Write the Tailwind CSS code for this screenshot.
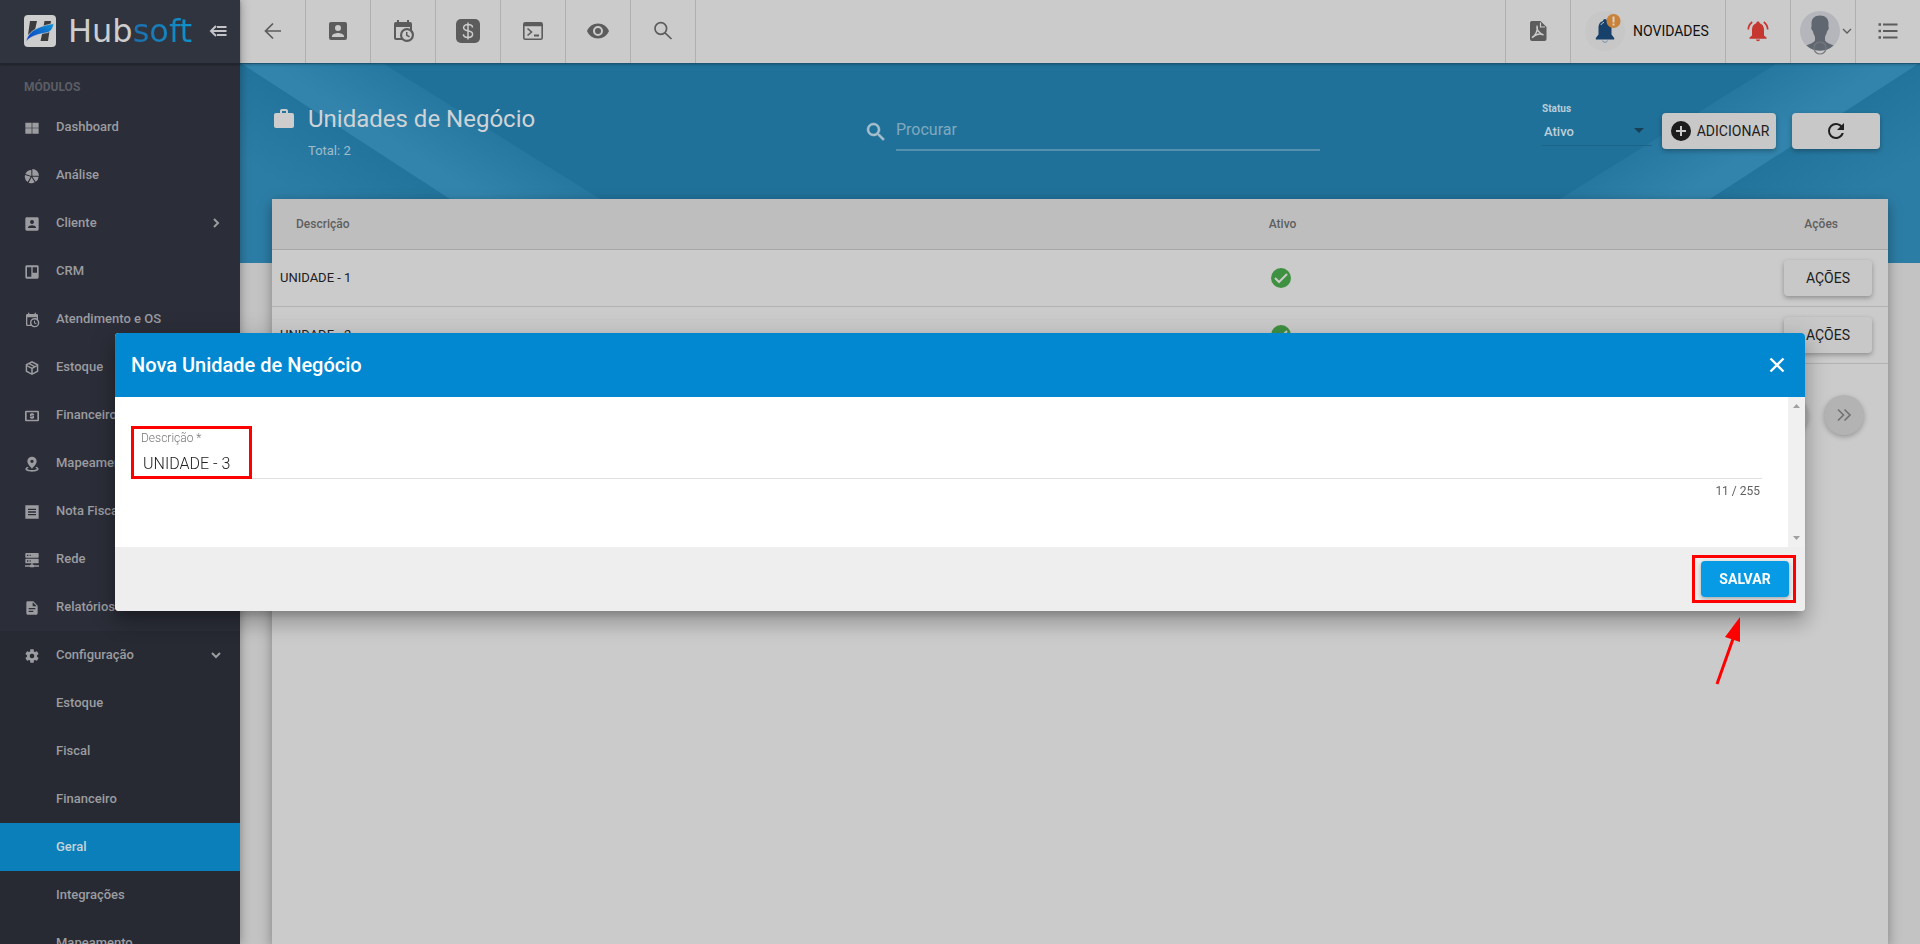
<!DOCTYPE html>
<html lang="pt-BR">
<head>
  <meta charset="UTF-8">
  <meta name="viewport" content="width=device-width, initial-scale=1.0">
  <title>Hubsoft - Unidades de Negócio</title>
  <script src="https://cdn.jsdelivr.net/npm/@tailwindcss/browser@4"></script>
</head>
<body class="h-screen overflow-hidden flex bg-[#c3c3c3] font-['Roboto','Liberation_Sans',sans-serif] text-[#202020]">

  <!-- Menu lateral -->
  <aside class="relative z-20 w-60 shrink-0 flex flex-col bg-[#2b2d38] shadow-[0_0_10px_rgba(0,0,0,0.35)]">
    <div class="h-16 shrink-0 flex items-center pl-6 pr-3 pb-px bg-[#30343f] border-b border-[#22252e] shadow-[0_1px_2px_rgba(0,0,0,0.3)]">
      <svg class="size-8 shrink-0" viewBox="0 0 32 32">
        <defs>
          <linearGradient id="swoosh" x1="0" y1="1" x2="1" y2="0">
            <stop offset="0" stop-color="#0a39c4"/><stop offset="1" stop-color="#1296d2"/>
          </linearGradient>
        </defs>
        <rect width="32" height="32" rx="4" fill="#cdcdcd"/>
        <path d="M6 6h7l-2 9-7 5zM20.500 6H27l-3 20h-7.500l1.800-8z" fill="#3c3c3e"/>
        <path d="M2 26.500C4 17 12 11.500 30 8.500C29 13 27.500 16 24 17.500C16 19 8 20 2 26.500Z" fill="url(#swoosh)" stroke="#cdcdcd" stroke-width=".7"/>
      </svg>
      <div class="flex-1 pl-3 text-[32px] leading-10 font-['DejaVu_Sans',sans-serif] whitespace-nowrap"><span class="text-[#cdcdcd]">Hub</span><span class="bg-linear-to-r from-[#1c6fae] to-[#0d93cb] bg-clip-text text-transparent">soft</span></div>
      <button class="size-5 shrink-0" aria-label="Recolher menu">
        <svg class="size-5" viewBox="0 0 20 20" fill="none" stroke="#c4c4c6" stroke-width="2"><path d="M8 5L3 10L8 15M4 10H18.500M9 6H18.500M9 14H18.500"/></svg>
      </button>
    </div>
    <h3 class="h-[39px] shrink-0 pl-6 pt-[13px] text-[12px] leading-5 font-bold text-[#5b5d65]">MÓDULOS</h3>
    <nav id="menu" class="text-[13px] font-medium text-[#9b9ca0]"></nav>
  </aside>

  <div class="flex-1 min-w-0 flex flex-col">
    <!-- Barra superior -->
    <header class="relative z-10 h-16 shrink-0 flex bg-[#cbcbcb] border-b border-[#1d5674] text-[#5c5c5c] shadow-[0_1px_2px_rgba(0,0,0,0.2)]">
      <button class="w-[66px] grid place-items-center pb-px border-r border-[#b0b0b0]" aria-label="Voltar">
        <svg class="size-6" viewBox="0 0 24 24" fill="none" stroke="currentColor" stroke-width="1.700"><path d="M20 12H5M12 4.500L4.500 12L12 19.500"/></svg>
      </button>
      <button class="w-[65px] grid place-items-center pb-px border-r border-[#b0b0b0]" aria-label="Clientes">
        <svg class="size-6" viewBox="0 0 24 24" fill="currentColor"><path d="M6,17C6,15 10,13.9 12,13.9C14,13.9 18,15 18,17V18H6M15,9A3,3 0 0,1 12,12A3,3 0 0,1 9,9A3,3 0 0,1 12,6A3,3 0 0,1 15,9M3,5V19A2,2 0 0,0 5,21H19A2,2 0 0,0 21,19V5A2,2 0 0,0 19,3H5C3.89,3 3,3.9 3,5Z"/></svg>
      </button>
      <button class="w-[65px] grid place-items-center pb-px border-r border-[#b0b0b0]" aria-label="Agenda">
        <svg class="size-6" viewBox="0 0 24 24" fill="currentColor"><path d="M15,13H16.5V15.82L18.94,17.23L18.19,18.53L15,16.69V13M19,8H5V19H9.67C9.24,18.09 9,17.07 9,16A7,7 0 0,1 16,9C17.07,9 18.09,9.24 19,9.67V8M5,21C3.89,21 3,20.1 3,19V5C3,3.89 3.89,3 5,3H6V1H8V3H16V1H18V3H19A2,2 0 0,1 21,5V11.1C22.24,12.36 23,14.09 23,16A7,7 0 0,1 16,23C14.09,23 12.36,22.24 11.1,21H5M16,11.15A4.85,4.85 0 0,0 11.15,16C11.15,18.68 13.32,20.85 16,20.85A4.85,4.85 0 0,0 20.85,16C20.85,13.32 18.68,11.15 16,11.15Z"/></svg>
      </button>
      <button class="w-[65px] grid place-items-center pb-px border-r border-[#b0b0b0]" aria-label="Financeiro">
        <svg class="size-6" viewBox="0 0 24 24"><rect width="24" height="24" rx="5" fill="#5c5c5c"/><path d="M16.500 8.500C16.500 6.500 14.500 5.600 12 5.600S7.600 6.600 7.600 8.700C7.600 13 16.600 10.600 16.600 15.200C16.600 17.400 14.600 18.400 12 18.400S7.400 17.400 7.400 15.200M12 3.500V20.500" fill="none" stroke="#cbcbcb" stroke-width="1.500"/></svg>
      </button>
      <button class="w-[65px] grid place-items-center pb-px border-r border-[#b0b0b0]" aria-label="Terminal">
        <svg class="size-6" viewBox="0 0 24 24" fill="none" stroke="currentColor" stroke-width="1.600"><rect x="2.800" y="3.800" width="18.400" height="16.400" rx="1.500"/><path d="M3 5.500H21" stroke-width="3.500"/><path d="M6.500 9.500L10.500 13L6.500 16.500"/><path d="M13 16.500H18" stroke-width="2"/></svg>
      </button>
      <button class="w-[65px] grid place-items-center pb-px border-r border-[#b0b0b0]" aria-label="Monitorar">
        <svg class="size-6" viewBox="0 0 24 24" fill="currentColor"><path d="M12,9A3,3 0 0,0 9,12A3,3 0 0,0 12,15A3,3 0 0,0 15,12A3,3 0 0,0 12,9M12,17A5,5 0 0,1 7,12A5,5 0 0,1 12,7A5,5 0 0,1 17,12A5,5 0 0,1 12,17M12,4.5C7,4.5 2.73,7.61 1,12C2.73,16.39 7,19.5 12,19.5C17,19.5 21.27,16.39 23,12C21.27,7.61 17,4.5 12,4.5Z"/></svg>
      </button>
      <button class="w-[65px] grid place-items-center pb-px border-r border-[#b0b0b0]" aria-label="Buscar">
        <svg class="size-6" viewBox="0 0 24 24" fill="none" stroke="currentColor" stroke-width="1.700"><circle cx="9.800" cy="9.500" r="5.800"/><path d="M14 13.800L20.500 20"/></svg>
      </button>
      <div class="flex-1"></div>
      <button class="w-[66px] grid place-items-center pb-px border-x border-[#b0b0b0]" aria-label="PDF">
        <svg class="size-6" viewBox="0 0 24 24"><path d="M5.500 2H14.500L20.500 8V20A2 2 0 0 1 18.500 22H6A2 2 0 0 1 4 20V4A2 2 0 0 1 5.500 2Z" fill="#5c5c5c"/><path d="M14.500 3.500V8H19" fill="none" stroke="#cbcbcb" stroke-width="1.200"/><path d="M11 7.500C10 9.500 12.500 14 17.500 16C14 14.200 9.500 15.200 6 18.700C9 17 12.500 11 11 7.500Z" fill="none" stroke="#cbcbcb" stroke-width="1.400"/></svg>
      </button>
      <button class="w-[155px] flex items-center gap-2 pl-[14px] pb-px border-r border-[#b0b0b0] text-sm text-[#101010]">
        <svg class="size-10" viewBox="0 0 40 40">
          <circle cx="20" cy="20" r="20" fill="#c7c7c7"/>
          <path d="M20 8C18.800 8 18 8.800 18 10C14.500 11 13.500 14 13.500 17V23.500L10.800 27V28.500H29.200V27L26.500 23.500V17C26.500 14 25.500 11 22 10C22 8.800 21.200 8 20 8Z" fill="#17406a"/>
          <path d="M16 14C16.500 12.500 17.500 11.800 19 11.500" fill="none" stroke="#c7c7c7"/>
          <path d="M17.500 29.500A2.600 2.600 0 0 0 22.500 29.500" fill="none" stroke="#7592ad"/>
          <circle cx="28.500" cy="10" r="7" fill="#c98237"/>
          <path d="M28.500 5.500V11.500M28.500 12.500V14.500" stroke="#dcd0c2" stroke-width="2"/>
        </svg>
        NOVIDADES
      </button>
      <button class="w-[65px] grid place-items-center pb-px border-r border-[#b0b0b0]" aria-label="Notificações">
        <svg class="size-6" viewBox="0 0 24 24"><path d="M12 2.500C11 2.500 10.300 3.200 10.300 4.200C7.500 5 6 7.500 6 10.500V16.500L3.500 18.500V19.700H20.500V18.500L18 16.500V10.500C18 7.500 16.500 5 13.700 4.200C13.700 3.200 13 2.500 12 2.500ZM10 20.600A2 1.700 0 0 0 14 20.600Z" fill="#c5372f"/><path d="M2.300 10.500C2.400 7.500 3.800 4.800 6.200 3M21.700 10.500C21.600 7.500 20.200 4.800 17.800 3" fill="none" stroke="#c5372f" stroke-width="1.700"/></svg>
      </button>
      <button class="w-[65px] flex items-center gap-[1px] pl-[9px] pb-px border-r border-[#b0b0b0]" aria-label="Usuário">
        <svg class="size-10 overflow-visible" viewBox="0 0 40 40">
          <circle cx="20" cy="20" r="20" fill="#b4b6bb"/>
          <path d="M20 4.500C14.500 4.500 11.500 7.500 11.500 12.500C11.500 14 11.800 15 11.200 16.500C11.200 18.500 12.200 19.200 12.800 20C13.500 23 14.500 24.500 15 26V29.500C13.500 32 9 33 6.500 34.500A20 20 0 0 0 33.500 34.500C31 33 26.500 32 25 29.500V26C25.500 24.500 26.500 23 27.200 20C27.800 19.200 28.800 18.500 28.800 16.500C28.200 15 28.500 14 28.500 12.500C28.500 7.500 25.500 4.500 20 4.500Z" fill="#616770"/>
          <path d="M14.500 39.200A20 20 0 0 0 25.500 39.200A6 6 0 0 1 14.500 39.200Z" fill="#cbcbcb"/>
          <circle cx="20" cy="37" r="6" fill="none" stroke="#77797c" stroke-width="1.200"/>
        </svg>
        <svg class="size-3" viewBox="0 0 12 12" fill="none" stroke="currentColor" stroke-width="1.300"><path d="M2 4L6 8L10 4"/></svg>
      </button>
      <button class="w-16 grid place-items-center pb-px" aria-label="Opções">
        <svg class="size-6" viewBox="0 0 24 24" stroke="currentColor" stroke-width="2"><path d="M2.500 5.500H5M2.500 12H5M2.500 18.500H5" stroke-width="2.400"/><path d="M7 5.500H21.500M7 12H21.500M7 18.500H21.500"/></svg>
      </button>
    </header>

    <main class="relative flex-1 min-h-0 flex flex-col">
      <div class="absolute inset-x-0 top-0 h-[199px] flex justify-between overflow-hidden bg-[#20719a]">
        <svg class="w-[480px] h-[200px] shrink-0" viewBox="0 0 480 200">
          <defs>
            <linearGradient id="outer" gradientUnits="userSpaceOnUse" x1="2" y1="0" x2="-42" y2="68">
              <stop offset="0" stop-color="#23749c"/><stop offset="1" stop-color="#2c7da6"/>
            </linearGradient>
            <linearGradient id="stripe" gradientUnits="userSpaceOnUse" x1="144" y1="0" x2="111" y2="52">
              <stop offset="0" stop-color="#2778a1"/><stop offset="1" stop-color="#3284ad"/>
            </linearGradient>
          </defs>
          <path d="M0 0H2L310 200H0Z" fill="url(#outer)"/>
          <path d="M2 0H144L464 200H310Z" fill="url(#stripe)"/>
        </svg>
        <svg class="w-[480px] h-[200px] shrink-0 -scale-x-100" viewBox="0 0 480 200">
          <path d="M0 0H2L310 200H0Z" fill="url(#outer)"/>
          <path d="M2 0H144L464 200H310Z" fill="url(#stripe)"/>
        </svg>
      </div>

      <!-- Cabeçalho da página -->
      <div class="relative h-[135px] shrink-0 flex items-start pl-8 pr-10">
        <svg class="size-6 mt-[43px]" viewBox="0 0 24 24" fill="#cdcdcd"><path d="M10,2H14A2,2 0 0,1 16,4V6H20A2,2 0 0,1 22,8V19A2,2 0 0,1 20,21H4C2.89,21 2,20.1 2,19V8C2,6.89 2.89,6 4,6H8V4C8,2.89 8.89,2 10,2M14,6V4H10V6H14Z"/></svg>
        <div class="w-[568px] pl-3 pt-[39px]">
          <h1 class="text-2xl leading-8 text-[#cfd3d6]">Unidades de Negócio</h1>
          <p class="pt-[6px] text-[13px] leading-5 text-[#9fbccb]">Total: 2</p>
        </div>
        <div class="flex-1 flex items-center pt-12">
          <label for="search" class="pr-2">
            <svg class="size-6" viewBox="0 0 24 24" fill="#a6c0cd"><path d="M9.500,3A6.500,6.500 0 0,1 16,9.500C16,11.110 15.410,12.590 14.440,13.730L14.710,14H15.500L20.500,19L19,20.500L14,15.500V14.710L13.730,14.440C12.590,15.410 11.110,16 9.500,16A6.500,6.500 0 0,1 3,9.500A6.500,6.500 0 0,1 9.500,3M9.500,5C7,5 5,7 5,9.500C5,12 7,14 9.500,14C12,14 14,12 14,9.500C14,7 12,5 9.500,5Z" stroke="#a6c0cd" stroke-width=".5"/></svg>
          </label>
          <input id="search" type="text" placeholder="Procurar" class="w-[424px] h-[39px] pb-[2px] border-b-2 border-[#5590ae] text-base text-[#cdcdcd] placeholder:text-[#7fa9be] outline-none">
        </div>
        <div class="relative w-[110px] pt-10">
          <label for="status" class="block h-[10px] text-[10px] leading-[10px] font-bold text-[#b9cdd7]">Status</label>
          <select id="status" class="appearance-none w-full h-[32px] pl-[2px] pt-[5px] border-b border-[#1b648a] text-[13px] font-medium text-[#bccfd9] outline-none">
            <option>Ativo</option>
            <option>Inativo</option>
          </select>
          <svg class="absolute right-2 top-[64px] w-[10px] h-[5px] pointer-events-none" viewBox="0 0 10 5" fill="#173f55"><path d="M0 0H10L5 5Z"/></svg>
        </div>
        <button class="mt-[49px] ml-[10px] w-[114px] h-9 flex items-center justify-center gap-1 rounded bg-[#c8c8c8] text-sm shadow-[0_2px_5px_rgba(0,0,0,0.3)]">
          <svg class="size-6" viewBox="0 0 24 24"><circle cx="12" cy="12" r="10" fill="#1c1c1c"/><path d="M12 7V17M7 12H17" stroke="#c8c8c8" stroke-width="2"/></svg>
          ADICIONAR
        </button>
        <button class="mt-[49px] ml-4 w-[88px] h-9 grid place-items-center rounded bg-[#c8c8c8] shadow-[0_2px_5px_rgba(0,0,0,0.3)]" aria-label="Atualizar">
          <svg class="size-6" viewBox="0 0 24 24" fill="#202020"><path d="M17.650,6.350C16.200,4.900 14.210,4 12,4A8,8 0 0,0 4,12A8,8 0 0,0 12,20C15.730,20 18.840,17.450 19.730,14H17.650C16.830,16.330 14.610,18 12,18A6,6 0 0,1 6,12A6,6 0 0,1 12,6C13.660,6 15.140,6.690 16.220,7.780L13,11H20V4L17.650,6.350Z"/></svg>
        </button>
      </div>

      <!-- Tabela -->
      <div class="relative flex-1 mx-8 bg-[#cbcbcb] shadow-[0_4px_12px_rgba(0,0,0,0.35)]">
        <table class="w-full table-fixed">
          <thead>
            <tr class="h-[50px] bg-[#bebebe] border-b border-[#a8a8a8] text-left text-xs text-[#5f5f5f]">
              <th class="w-[61%] pl-6 font-medium">Descrição</th>
              <th class="pl-[11px] font-medium">Ativo</th>
              <th class="pr-[50px] text-right font-medium">Ações</th>
            </tr>
          </thead>
          <tbody id="units" class="text-[13px]"></tbody>
        </table>
        <div class="flex justify-end gap-4 pt-[31px] pr-6">
          <button class="size-10 grid place-items-center rounded-full bg-[#b3b3b3] text-[#707070] shadow-[0_2px_5px_rgba(0,0,0,0.25)]" aria-label="Próxima">
            <svg class="size-6" viewBox="0 0 24 24" fill="none" stroke="currentColor" stroke-width="1.600"><path d="M9 6L15 12L9 18"/></svg>
          </button>
          <button class="size-10 grid place-items-center rounded-full bg-[#b3b3b3] text-[#707070] shadow-[0_2px_5px_rgba(0,0,0,0.25)]" aria-label="Última">
            <svg class="size-6" viewBox="0 0 24 24" fill="none" stroke="currentColor" stroke-width="1.600"><path d="M6 6.500L11.500 12L6 17.500M12.500 6.500L18 12L12.500 17.500"/></svg>
          </button>
        </div>
      </div>
    </main>
  </div>

  <!-- Janela de cadastro -->
  <div class="fixed inset-0 z-30 flex items-center px-[115px]">
    <form role="dialog" aria-labelledby="dialog-title" class="flex-1 rounded bg-white shadow-[0_7px_8px_-4px_rgba(0,0,0,0.2),0_13px_19px_2px_rgba(0,0,0,0.14),0_5px_24px_4px_rgba(0,0,0,0.14)]">
      <div class="h-16 flex items-center justify-between pl-4 pr-4 rounded-t bg-[#0288d1] text-white">
        <h2 id="dialog-title" class="text-xl font-medium">Nova Unidade de Negócio</h2>
        <button type="button" class="size-6" aria-label="Fechar">
          <svg class="size-6" viewBox="0 0 24 24" fill="none" stroke="currentColor" stroke-width="2.300"><path d="M5.500 5.500L18.500 18.500M18.500 5.500L5.500 18.500"/></svg>
        </button>
      </div>
      <div class="h-[150px] flex">
        <div class="flex-1 pl-[25px] pr-[26px] pt-[33px]">
          <div class="relative">
            <label for="descricao" class="block pl-px text-xs leading-4 font-light text-[#757575]">Descrição *</label>
            <input id="descricao" type="text" maxlength="255" value="UNIDADE - 3" class="w-full h-[33px] pl-[3px] pt-[2px] border-b border-[#dedede] text-base font-light text-[#212121] outline-none">
            <div class="absolute -left-[9px] -top-[4px] w-[121px] h-[53px] border-3 border-[#ff0000]"></div>
          </div>
          <p class="pt-1 pr-[2px] text-right text-xs leading-4 text-[#616161]">11 / 255</p>
        </div>
        <div class="w-[17px] flex flex-col items-center justify-between py-[7px] bg-[#f0f0f0]">
          <svg class="w-[7px] h-1" viewBox="0 0 7 4" fill="#a0a0a0"><path d="M3.500 0L7 4H0Z"/></svg>
          <svg class="w-[7px] h-1" viewBox="0 0 7 4" fill="#a0a0a0"><path d="M0 0H7L3.500 4Z"/></svg>
        </div>
      </div>
      <div class="h-16 flex items-center justify-end px-4 rounded-b bg-[#eeeeee]">
        <div class="relative">
          <button type="button" class="block w-[88px] h-9 rounded bg-[#079be6] text-sm font-bold text-white shadow-[0_2px_5px_rgba(0,0,0,0.3)]">SALVAR</button>
          <div class="absolute -left-[9px] -right-[7px] -inset-y-[6px] border-3 border-[#ff0000]"></div>
          <svg class="absolute left-[12px] top-[56px] w-[30px] h-[70px]" viewBox="0 0 30 70"><path d="M4 67L20 22" stroke="#ff0000" stroke-width="3"/><path d="M27 0L12 20L27 25Z" fill="#ff0000"/></svg>
        </div>
      </div>
    </form>
  </div>

  <script>
    const modules = [
      { name: "Dashboard", icon: "M2,4H11.500V11.500H2ZM12.500,4H22V11.500H12.500ZM2,12.500H11.500V20.500H2ZM12.500,12.500H22V20.500H12.500Z" },
      { name: "Análise", icon: "M12.500,1.500A10,10 0 0,1 22.500,11.500H12.500ZM11,3V12L2,9A10,10 0 0,1 11,3ZM1.500,10.500L10,13.300L5.500,21A10,10 0 0,1 1.500,10.500ZM12.500,13H22A10,10 0 0,1 17.500,20.500ZM11.300,13.800L16,21.500A10,10 0 0,1 7,22Z" },
      { name: "Cliente", arrow: "M9 6L15 12L9 18", icon: "M6,17C6,15 10,13.9 12,13.9C14,13.9 18,15 18,17V18H6M15,9A3,3 0 0,1 12,12A3,3 0 0,1 9,9A3,3 0 0,1 12,6A3,3 0 0,1 15,9M2,4V20A2,2 0 0,0 4,22H20A2,2 0 0,0 22,20V4A2,2 0 0,0 20,2H4C2.890,2 2,2.900 2,4Z" },
      { name: "CRM", icon: "M4,2A2,2 0 0,0 2,4V20A2,2 0 0,0 4,22H20A2,2 0 0,0 22,20V4A2,2 0 0,0 20,2ZM4.500,5H11V19H4.500ZM13,5H19.500V13H13Z" },
      { name: "Atendimento e OS", icon: "M15,13H16.5V15.82L18.94,17.23L18.19,18.53L15,16.69V13M19,8H5V19H9.67C9.24,18.09 9,17.07 9,16A7,7 0 0,1 16,9C17.07,9 18.09,9.24 19,9.67V8M5,21C3.89,21 3,20.1 3,19V5C3,3.89 3.89,3 5,3H6V1H8V3H16V1H18V3H19A2,2 0 0,1 21,5V11.1C22.24,12.36 23,14.09 23,16A7,7 0 0,1 16,23C14.09,23 12.36,22.24 11.1,21H5M16,11.15A4.85,4.85 0 0,0 11.15,16C11.15,18.68 13.32,20.85 16,20.85A4.85,4.85 0 0,0 20.85,16C20.85,13.32 18.68,11.15 16,11.15Z" },
      { name: "Estoque", icon: "M12,1.500L21.500,6.500V17.500L12,22.500L2.500,17.500V6.500ZM12,4L9.500,5.300L16.500,9L19,7.800ZM7.300,6.500L5,7.800L12,11.300L14.200,10.200ZM4.700,9.800V16.300L10.800,19.500V13ZM19.300,9.800L13.200,13V19.500L19.300,16.300Z" },
      { name: "Financeiro", icon: "M3,4A2,2 0 0,0 1.500,5.500V18.500A2,2 0 0,0 3,20H21A2,2 0 0,0 22.500,18.500V5.500A2,2 0 0,0 21,4ZM4,6.500H20V17.500H4ZM11,7.500H13V8.500H15V10.500H11V11.200H15V15.500H13V16.500H11V15.500H9V13.500H13V12.800H9V8.500H11Z" },
      { name: "Mapeamento", icon: "M12,1A7,7 0 0,0 5,8C5,12.500 12,19 12,19C12,19 19,12.500 19,8A7,7 0 0,0 12,1ZM12,5.500A2.500,2.500 0 0,1 12,10.500A2.500,2.500 0 0,1 12,5.500ZM5.500,16C3,17 2,18.500 2,19.500C2,21.500 6,23.500 12,23.500S22,21.500 22,19.500C22,18.500 21,17 18.500,16L17,17.500C18.500,18 19.500,19 19.500,19.500C19.500,20 17,21 12,21S4.500,20 4.500,19.500C4.500,19 5.500,18 7,17.500Z" },
      { name: "Nota Fiscal", icon: "M2,2H22V22H2ZM6,7V9H18V7ZM6,11V13H18V11ZM6,15V17H18V15Z" },
      { name: "Rede", icon: "M3,1.500H21A1,1 0 0,1 22,2.500V7.500A1,1 0 0,1 21,8.500H3A1,1 0 0,1 2,7.500V2.500A1,1 0 0,1 3,1.500ZM4.500,4V6H6.500V4ZM8.500,4V6H10V4ZM3,10H21A1,1 0 0,1 22,11V16A1,1 0 0,1 21,17H3A1,1 0 0,1 2,16V11A1,1 0 0,1 3,10ZM4.500,12.500V14.500H6.500V12.500ZM8.500,12.500V14.500H10V12.500ZM11,17H13V19H15V20H22.500V22H15V23H9V22H1.500V20H9V19H11Z" },
      { name: "Relatórios", icon: "M5,2A2,2 0 0,0 3.500,4V20A2,2 0 0,0 5,22H19A2,2 0 0,0 20.500,20V8.500L14,2ZM13,3.500L19,9.500H13ZM7,12V14H17V12ZM7,16V18H14V16Z" }
    ];
    const settings = { name: "Configuração", arrow: "M6 9L12 15L18 9", icon: "M12,15.500A3.500,3.500 0 0,1 8.500,12A3.500,3.500 0 0,1 12,8.500A3.500,3.500 0 0,1 15.500,12A3.500,3.500 0 0,1 12,15.500M19.430,12.970C19.470,12.650 19.500,12.330 19.500,12C19.500,11.670 19.470,11.340 19.430,11L21.540,9.370C21.730,9.220 21.780,8.950 21.660,8.730L19.660,5.270C19.540,5.050 19.270,4.960 19.050,5.050L16.560,6.050C16.040,5.660 15.500,5.320 14.870,5.070L14.500,2.420C14.460,2.180 14.250,2 14,2H10C9.750,2 9.540,2.180 9.500,2.420L9.130,5.070C8.500,5.320 7.960,5.660 7.440,6.050L4.950,5.050C4.730,4.960 4.460,5.050 4.340,5.270L2.340,8.730C2.210,8.950 2.270,9.220 2.460,9.370L4.570,11C4.530,11.340 4.500,11.670 4.500,12C4.500,12.330 4.530,12.650 4.570,12.970L2.460,14.630C2.270,14.780 2.210,15.050 2.340,15.270L4.340,18.730C4.460,18.950 4.730,19.030 4.950,18.950L7.440,17.940C7.960,18.340 8.500,18.680 9.130,18.930L9.500,21.580C9.540,21.820 9.750,22 10,22H14C14.250,22 14.460,21.820 14.500,21.580L14.870,18.930C15.500,18.670 16.040,18.340 16.560,17.940L19.050,18.950C19.270,19.030 19.540,18.950 19.660,18.730L21.660,15.270C21.780,15.050 21.730,14.780 21.540,14.630L19.430,12.970Z" };
    const settingsItems = ["Estoque", "Fiscal", "Financeiro", "Geral", "Integrações", "Mapeamento"];
    const units = ["UNIDADE - 1", "UNIDADE - 2"];

    const menuItem = m => `
      <a href="#" class="h-12 flex items-center pl-6 pr-4">
        <svg class="size-4 mt-px mr-4" viewBox="0 0 24 24" fill="currentColor" fill-rule="evenodd"><path d="${m.icon}"/></svg>
        <span class="flex-1">${m.name}</span>
        ${m.arrow ? `<svg class="size-4" viewBox="0 0 24 24" fill="none" stroke="currentColor" stroke-width="3"><path d="${m.arrow}"/></svg>` : ""}
      </a>`;

    document.getElementById("menu").innerHTML = modules.map(menuItem).join("") + `
      <div class="bg-[#272a32]">
        ${menuItem(settings)}
        ${settingsItems.map(s => `<a href="#" class="h-12 flex items-center pl-14 ${s === "Geral" ? "bg-[#0b7fb9] text-[#c6d3da]" : ""}">${s}</a>`).join("")}
      </div>`;

    document.getElementById("units").innerHTML = units.map(u => `
      <tr class="h-[57px] border-b border-[#b2b2b2]">
        <td class="pl-2">${u}</td>
        <td class="pl-[11px]">
          <svg class="size-6" viewBox="0 0 24 24"><circle cx="12" cy="12" r="10" fill="#3f9142"/><path d="M6 12L10 16L18 8" fill="none" stroke="#cbcbcb" stroke-width="2"/></svg>
        </td>
        <td class="pr-4">
          <button class="block ml-auto w-[88px] h-9 rounded bg-[#c8c8c8] text-sm shadow-[0_2px_5px_rgba(0,0,0,0.3)]">AÇÕES</button>
        </td>
      </tr>`).join("");
  </script>
</body>
</html>
